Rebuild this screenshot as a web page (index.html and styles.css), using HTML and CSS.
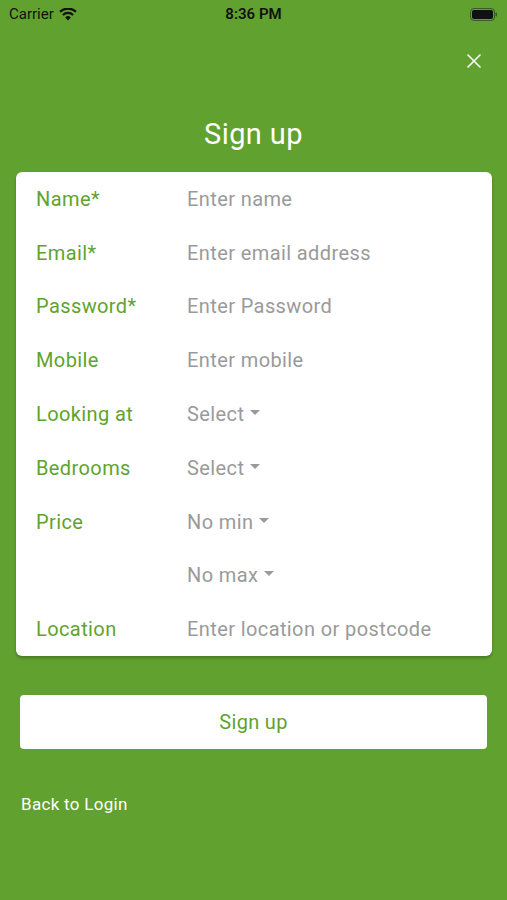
FILE: index.html
```html
<!DOCTYPE html>
<html lang="en">
<head>
    <meta charset="UTF-8">
    <meta name="viewport" content="width=device-width, initial-scale=1.0">
    <title>Sign up</title>
    <link rel="stylesheet" href="styles.css">
</head>
<body>
    <div id="screen">
        <div class="status-bar">
            <div class="status-left">
                <span>Carrier</span>
                <svg class="wifi" width="18" height="13" viewBox="0 0 18 13">
                    <path d="M9 12.5 L6.2 9.4 A4 4 0 0 1 11.8 9.4 Z" fill="#111"/>
                    <path d="M3.9 7 A7.4 7.4 0 0 1 14.1 7" stroke="#111" stroke-width="2.2" fill="none"/>
                    <path d="M1 3.8 A11.5 11.5 0 0 1 17 3.8" stroke="#111" stroke-width="2.2" fill="none"/>
                </svg>
            </div>
            <div class="status-time">8:36 PM</div>
            <div class="status-right">
                <svg width="28" height="13" viewBox="0 0 28 13">
                    <rect x="0.5" y="0.5" width="24" height="12" rx="3.5" fill="none" stroke="#3c5a22" stroke-width="1"/>
                    <rect x="2" y="2" width="21" height="9" rx="2" fill="#111"/>
                    <rect x="25.5" y="4.5" width="1.5" height="4" rx="0.7" fill="#3c5a22"/>
                </svg>
            </div>
        </div>

        <div class="top-bar">
            <button class="close" aria-label="Close">
                <svg width="16" height="16" viewBox="0 0 16 16">
                    <path d="M2 2 L14 14 M14 2 L2 14" stroke="#fff" stroke-width="1.6" stroke-linecap="round"/>
                </svg>
            </button>
        </div>

        <h1 class="title">Sign up</h1>

        <div class="card">
            <div class="row"><span class="label">Name*</span><span class="value">Enter name</span></div>
            <div class="row"><span class="label">Email*</span><span class="value">Enter email address</span></div>
            <div class="row"><span class="label">Password*</span><span class="value">Enter Password</span></div>
            <div class="row"><span class="label">Mobile</span><span class="value">Enter mobile</span></div>
            <div class="row"><span class="label">Looking at</span><span class="value select">Select</span></div>
            <div class="row"><span class="label">Bedrooms</span><span class="value select">Select</span></div>
            <div class="row"><span class="label">Price</span><span class="value select">No min</span></div>
            <div class="row"><span class="label"></span><span class="value select">No max</span></div>
            <div class="row"><span class="label">Location</span><span class="value">Enter location or postcode</span></div>
        </div>

        <button class="signup">Sign up</button>

        <a class="back" href="#">Back to Login</a>
    </div>
</body>
</html>
```

FILE: styles.css
```css
body {
    margin: 0;
    padding: 0;
    background-color: #61a12f;
    font-family: Roboto, "Liberation Sans", sans-serif;
}
#screen {
    width: 507px;
    height: 900px;
    background-color: #61a12f;
    display: flex;
    flex-direction: column;
}
.status-bar {
    height: 28px;
    display: flex;
    align-items: center;
    justify-content: space-between;
    padding: 0 9px 0 9px;
    font-size: 15px;
    color: #111;
}
.status-left {
    display: flex;
    align-items: center;
    gap: 5px;
    width: 120px;
}
.status-time {
    font-weight: 600;
}
.status-right {
    width: 120px;
    display: flex;
    justify-content: flex-end;
}
.top-bar {
    height: 66px;
    display: flex;
    justify-content: flex-end;
    align-items: center;
    padding-right: 25px;
}
.close {
    background: none;
    border: none;
    padding: 0;
    width: 16px;
    height: 16px;
    cursor: pointer;
}
.title {
    margin: 0;
    height: 78px;
    line-height: 80px;
    text-align: center;
    color: #fff;
    font-weight: 400;
    font-size: 29px;
    letter-spacing: 0.4px;
}
.card {
    margin: 0 15px 0 16px;
    background-color: #fff;
    border-radius: 6px;
    box-shadow: 0 2px 3px rgba(0, 0, 0, 0.25);
    display: flex;
    flex-direction: column;
}
.row {
    height: 53.8px;
    display: flex;
    align-items: center;
    font-size: 20px;
    letter-spacing: 0.4px;
}
.label {
    width: 151px;
    padding-left: 20px;
    color: #5fa32f;
}
.value {
    color: #9a9a9a;
    display: flex;
    align-items: center;
}
.select::after {
    content: "";
    margin-left: 6px;
    margin-bottom: 3px;
    border-left: 5.5px solid transparent;
    border-right: 5.5px solid transparent;
    border-top: 5.5px solid #9a9a9a;
}
.signup {
    margin: 39px 20px 0 20px;
    height: 54px;
    border: none;
    border-radius: 4px;
    background-color: #fff;
    color: #5fa32f;
    font-family: inherit;
    font-size: 20px;
    letter-spacing: 0.3px;
    cursor: pointer;
}
.back {
    margin: 45px 0 0 21px;
    color: #fff;
    text-decoration: none;
    font-size: 17px;
    letter-spacing: 0.3px;
}
```
